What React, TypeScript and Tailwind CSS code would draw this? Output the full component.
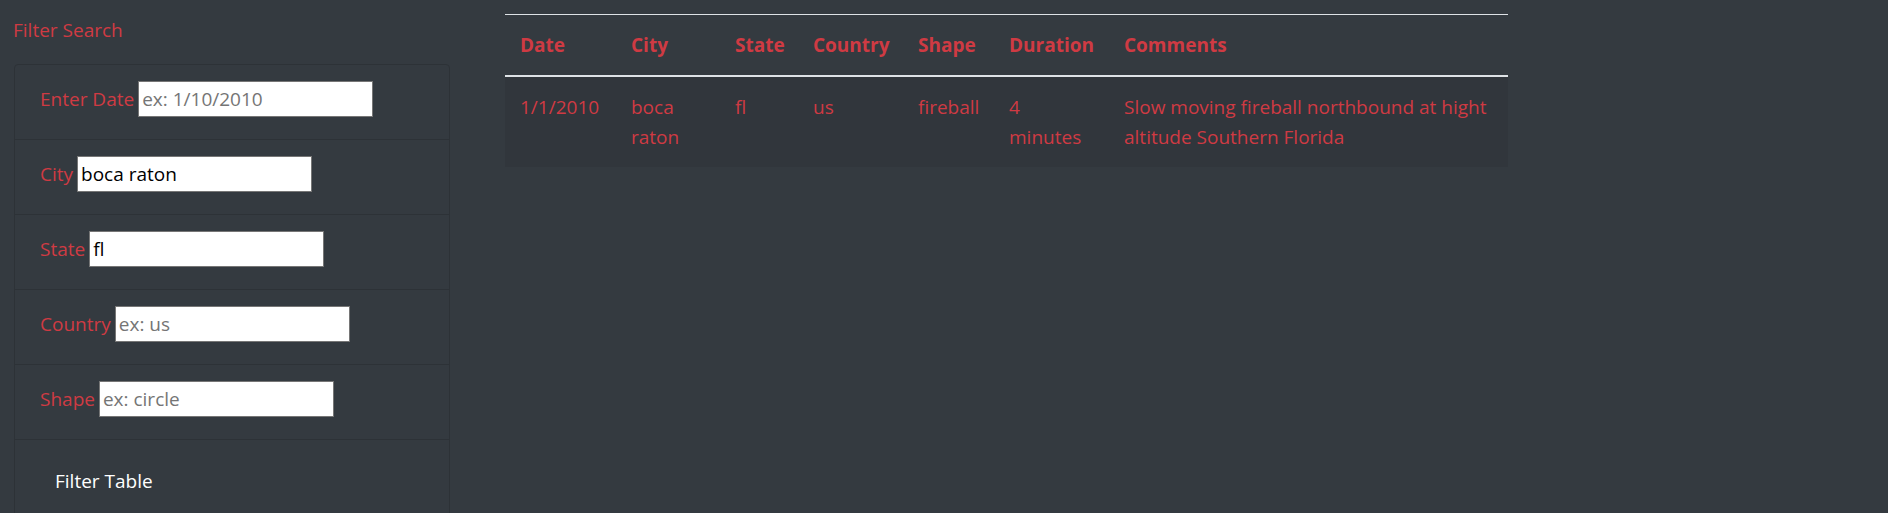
const rows = [
  { label: "Enter Date", value: "", placeholder: "ex: 1/10/2010" },
  { label: "City", value: "boca raton", placeholder: "" },
  { label: "State", value: "fl", placeholder: "" },
  { label: "Country", value: "", placeholder: "ex: us" },
  { label: "Shape", value: "", placeholder: "ex: circle" },
];

const columns = [
  { name: "Date", w: "w-[111px]" },
  { name: "City", w: "w-[104px]" },
  { name: "State", w: "w-[78px]" },
  { name: "Country", w: "w-[105px]" },
  { name: "Shape", w: "w-[91px]" },
  { name: "Duration", w: "w-[115px]" },
  { name: "Comments", w: "w-[399px]" },
];

const sighting = [
  "1/1/2010",
  "boca raton",
  "fl",
  "us",
  "fireball",
  "4 minutes",
  "Slow moving fireball northbound at hight altitude Southern Florida",
];

export default function App() {
  return (
    <div className="min-h-[513px] w-full bg-[#343a40] text-[#cf3a43] font-['Open_Sans',sans-serif] text-[19px] leading-[30px] flex items-start overflow-hidden">
      {/* filtros */}
      <aside className="w-[450px] shrink-0 pl-[14px]">
        <h5 className="pt-[15px] pb-[19px] -ml-[1px] text-[19px] leading-[30px]">Filter Search</h5>
        <form className="border border-[#2d3237] rounded-[4px]">
          {rows.map((r) => (
            <div key={r.label} className="h-[75px] border-b border-[#2d3237] pl-[25px] pt-[16px]">
              <div className="flex items-center gap-[4px] h-[36px]">
                <label htmlFor={r.label}>{r.label}</label>
                <input
                  id={r.label}
                  type="text"
                  defaultValue={r.value}
                  placeholder={r.placeholder}
                  className="w-[235px] h-[36px] bg-white border border-[#767676] px-[3px] text-black placeholder:text-[#757575] text-[19px] outline-none"
                />
              </div>
            </div>
          ))}
          <div className="h-[90px] pl-[25px] pt-[26px]">
            <button type="button" className="px-[15px] py-0 text-white leading-[30px]">
              Filter Table
            </button>
          </div>
        </form>
      </aside>

      {/* tabla */}
      <div className="ml-[55px] mt-[14px] w-[1003px]">
        <table className="w-full table-fixed border-collapse text-left">
          <thead>
            <tr className="border-t border-[#dee2e6] border-b-2 border-b-[#dee2e6]">
              {columns.map((c) => (
                <th key={c.name} className={`${c.w} px-[15px] py-[15px] font-bold align-bottom`}>
                  {c.name}
                </th>
              ))}
            </tr>
          </thead>
          <tbody>
            <tr className="bg-[#31363c]">
              {sighting.map((v, i) => (
                <td key={i} className="px-[15px] py-[15px] align-top">
                  {v}
                </td>
              ))}
            </tr>
          </tbody>
        </table>
      </div>
    </div>
  );
}
